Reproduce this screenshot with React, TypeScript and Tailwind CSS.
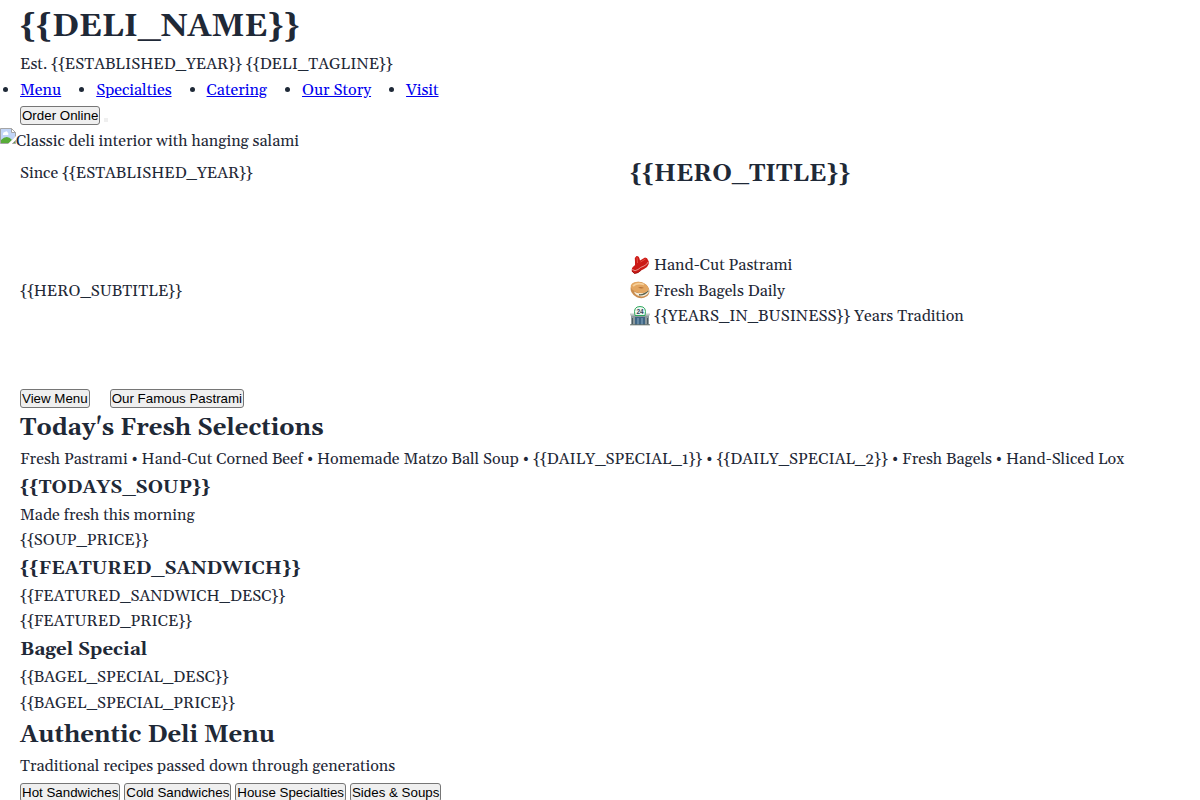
import React from 'react';

const Line = ({ children, className = 'pt-px' }: { children: string; className?: string }) => (
  <p className={`h-[25.6px] whitespace-nowrap ${className}`}>{children}</p>
);
const Heading = ({ children }: { children: string }) => (
  <h2 className="h-[38.4px] pt-px text-[24px] leading-[38.4px] font-bold whitespace-nowrap">{children}</h2>
);
const Subheading = ({ children }: { children: string }) => (
  <h3 className="h-[29.95px] pt-px text-[18.72px] leading-[29.95px] font-bold whitespace-nowrap">{children}</h3>
);
const Button = ({ children }: { children: string }) => (
  <button className="h-[19px] shrink-0 rounded-[3px] border border-[#767676] bg-[#efefef] px-px text-left font-['Liberation_Sans',sans-serif] text-[13.333px] leading-[17px] whitespace-nowrap text-black">
    {children}
  </button>
);

const links = ['Menu', 'Specialties', 'Catering', 'Our Story', 'Visit'];

const Steak = () => (
  <svg viewBox="0 0 20 20" className="size-5">
    <path d="M6.5 1Q9 .5 9.5 3.5L10 5.5L15 2.5L17 3.2L18.8 6.5Q19.5 9.5 17 12Q14 14 11 15.5Q8.5 18.5 4.5 18.7L1.8 16.5Q1.2 12.5 4 11Q5.5 10 5 7L4.8 3Z" fill="#cb1a16" />
    <path d="M2.2 14.5Q5 16.8 8 14.5Q10.5 12 14 11Q17 9.8 18.3 6.8" stroke="#e9a29a" strokeWidth="0.9" fill="none" />
    <path d="M7 2.5L7.5 8M10.5 7L15.5 4" stroke="#e9564a" strokeWidth="0.9" fill="none" />
    <path d="M2 16L4.5 18.5Q8.5 18 11 15.3" stroke="#8f1311" strokeWidth="0.8" fill="none" />
  </svg>
);
const Bagel = () => (
  <svg viewBox="0 0 20 20" className="size-5">
    <ellipse cx="10" cy="10" rx="9.7" ry="7.8" transform="rotate(24 10 10)" fill="#c98d4f" />
    <path d="M4 11.5Q9 15 13 11.5Q16 10 19 9.5L18.5 13Q15 17.5 9 16Q5 14.5 4 11.5Z" fill="#f6eddb" />
    <path d="M9 14.8Q14 15.5 18.3 10.5" stroke="#59614f" strokeWidth="1.4" fill="none" />
    <ellipse cx="9.5" cy="7.6" rx="9" ry="5.4" transform="rotate(14 10 8)" fill="#e3a661" />
    <path d="M3 6Q7 2 14 4.5" stroke="#f6cf99" strokeWidth="1.8" fill="none" />
    <path d="M8 7.5Q11 6.2 14 8Q11 9.2 8 7.5Z" fill="#b6733a" />
  </svg>
);
const Store = () => (
  <svg viewBox="0 0 20 20" className="size-5">
    <path d="M1 8H19V19H1Z" fill="#8d9a9d" />
    <path d="M0 7.5H20V9.5H0Z" fill="#c3cac8" />
    <path d="M5 11H15V19H5Z" fill="#3f6685" />
    <path d="M8 12V19M12 12V19" stroke="#8daec4" />
    <path d="M2.5 12V18M17.5 12V18" stroke="#4b5a60" />
    <path d="M0 18.8H20" stroke="#65716a" />
    <path d="M5 9.5Q2.8 .5 10 .5T15 9.5Z" fill="#eef8f3" stroke="#31a95e" />
    <text x="10" y="7.8" textAnchor="middle" fontSize="6.5" fontWeight="bold" fill="#34465a" fontFamily="Liberation Sans">24</text>
  </svg>
);

const features: [React.ReactNode, string][] = [
  [<Steak />, 'Hand-Cut Pastrami'],
  [<Bagel />, 'Fresh Bagels Daily'],
  [<Store />, '{{YEARS_IN_BUSINESS}} Years Tradition'],
];

export default function App() {
  return (
    <div className="h-[800px] w-[1200px] overflow-hidden bg-white font-[Georgia,Gelasio,'Liberation_Serif',serif] text-[16px] leading-[25.6px] text-[#1f2937]">
      <header className="px-5">
        <h1 className="h-[51.2px] pt-px text-[32px] leading-[51.2px] font-bold">{'{{DELI_NAME}}'}</h1>
        <Line>{'Est. {{ESTABLISHED_YEAR}} {{DELI_TAGLINE}}'}</Line>
        <ul className="-ml-[17px] flex h-[25.6px]">
          {links.map((label) => (
            <li key={label} className="mr-[18px] flex items-start">
              <span className="mt-2.5 mr-3 size-[5px] rounded-full bg-[#1f2937]" />
              <a href="#" className="pt-px text-[#0000ee] underline">{label}</a>
            </li>
          ))}
        </ul>
        <div className="flex h-[25.6px] items-start gap-1 pt-[3.6px]">
          <Button>Order Online</Button>
          <span className="mt-3 size-1 bg-[#efefef]" />
        </div>
      </header>
      <div className="flex h-[25.6px]">
        <svg viewBox="0 0 16 16" className="size-4">
          <path d="M.5.5H11.5L15.5 4.5V9L9 15.5H.5Z" fill="#c2d5f7" stroke="#a5a5a5" />
          <path d="M11.5.5V4.5H15.5Z" fill="#fff" stroke="#a5a5a5" />
          <path d="M3 6Q3 4 5 4Q7 2 8 5Q9 6 8 7H3Z" fill="#fff" />
          <path d="M1 15V12Q7 6 12 12L9 15Z" fill="#58ac38" />
          <path d="M8 16L16 8V11L11 16Z" fill="#fff" />
          <path d="M12.5 15.5H15.5V12.5Z" fill="#58ac38" stroke="#a5a5a5" />
        </svg>
        <Line>Classic deli interior with hanging salami</Line>
      </div>
      <section className="grid h-[254.2px] grid-cols-2 grid-rows-[38.4px_76.8px_19px] gap-[60px] px-5">
        <div className="self-center"><Line>{'Since {{ESTABLISHED_YEAR}}'}</Line></div>
        <Heading>{'{{HERO_TITLE}}'}</Heading>
        <div className="self-center"><Line>{'{{HERO_SUBTITLE}}'}</Line></div>
        <ul>
          {features.map(([icon, label]) => (
            <li key={label} className="flex h-[25.6px] items-center gap-1">{icon}<Line>{label}</Line></li>
          ))}
        </ul>
        <div className="flex gap-5"><Button>View Menu</Button><Button>Our Famous Pastrami</Button></div>
      </section>
      <main className="px-5">
        <Heading>Today's Fresh Selections</Heading>
        <Line>{'Fresh Pastrami • Hand-Cut Corned Beef • Homemade Matzo Ball Soup • {{DAILY_SPECIAL_1}} • {{DAILY_SPECIAL_2}} • Fresh Bagels • Hand-Sliced Lox'}</Line>
        <Subheading>{'{{TODAYS_SOUP}}'}</Subheading>
        <Line>Made fresh this morning</Line>
        <Line>{'{{SOUP_PRICE}}'}</Line>
        <Subheading>{'{{FEATURED_SANDWICH}}'}</Subheading>
        <Line>{'{{FEATURED_SANDWICH_DESC}}'}</Line>
        <Line>{'{{FEATURED_PRICE}}'}</Line>
        <Subheading>Bagel Special</Subheading>
        <Line>{'{{BAGEL_SPECIAL_DESC}}'}</Line>
        <Line>{'{{BAGEL_SPECIAL_PRICE}}'}</Line>
        <Heading>Authentic Deli Menu</Heading>
        <Line className="pt-0">Traditional recipes passed down through generations</Line>
        <div className="flex gap-1 pt-[3.6px]">
          <Button>Hot Sandwiches</Button>
          <Button>Cold Sandwiches</Button>
          <Button>House Specialties</Button>
          <Button>{'Sides & Soups'}</Button>
        </div>
      </main>
    </div>
  );
}
